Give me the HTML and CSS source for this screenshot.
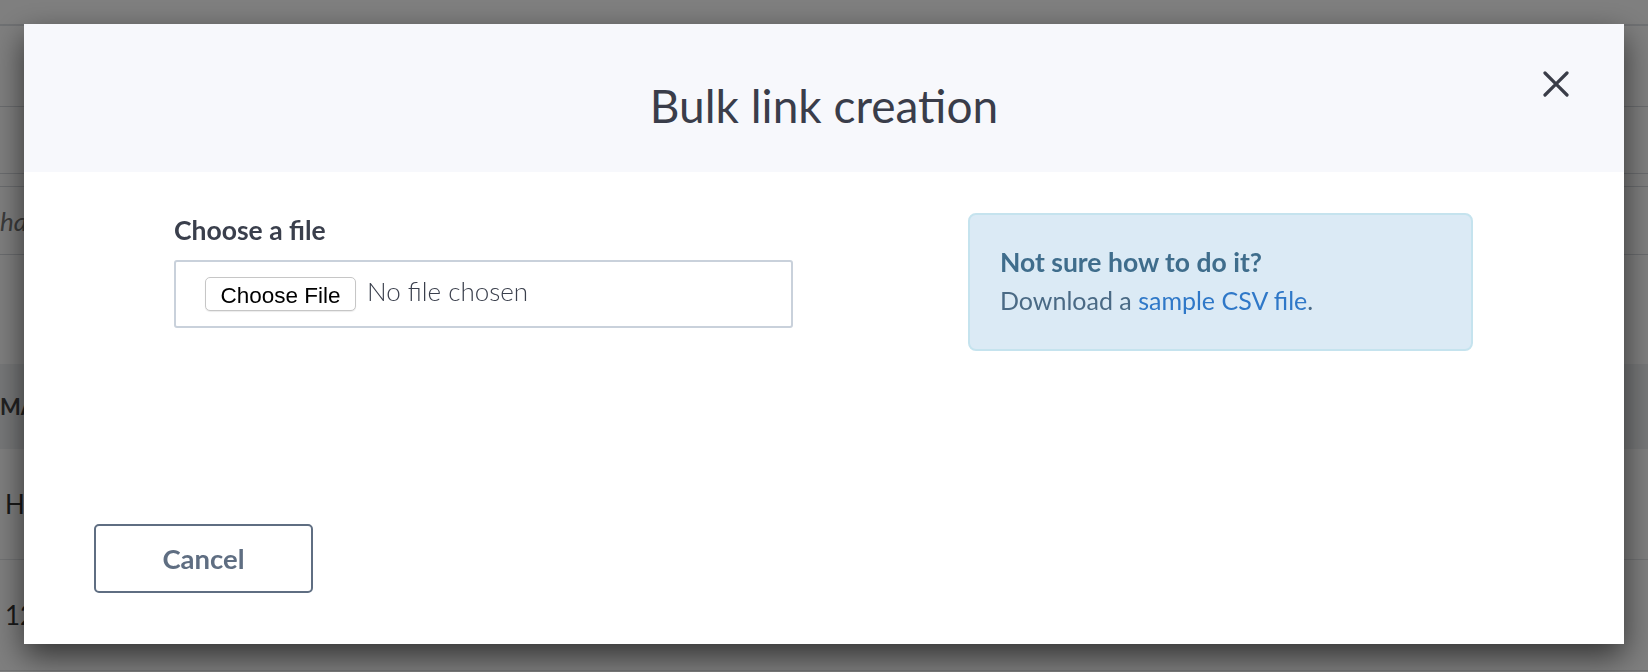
FILE: index.html
```html
<!DOCTYPE html>
<html lang="en">
<head>
<meta charset="utf-8">
<title>Bulk link creation</title>
<link rel="stylesheet" href="styles.css">
</head>
<body>
<div class="page">
  <div class="topbar"></div>
  <div class="nav"></div>
  <div class="subnav"></div>
  <div class="search"><span class="search-text">ha</span></div>
  <div class="thead"><span class="th">MA</span></div>
  <div class="trow"><span class="td">H</span></div>
  <div class="trow"><span class="td">12</span></div>
</div>

<div class="overlay">
  <div class="modal">
    <div class="modal-header">
      <h1 class="modal-title">Bulk link creation</h1>
      <button class="modal-close" aria-label="Close">
        <svg width="26" height="26" viewBox="0 0 26 26"><path d="M2 2 L24 24 M24 2 L2 24" stroke="#3a3d48" stroke-width="3.2" stroke-linecap="round" fill="none"/></svg>
      </button>
    </div>
    <div class="modal-body">
      <div class="upload">
        <div class="upload-label">Choose a file</div>
        <div class="file-box">
          <span class="file-btn">Choose File</span>
          <span class="file-name">No file chosen</span>
        </div>
      </div>
      <div class="info">
        <div class="info-title">Not sure how to do it?</div>
        <div class="info-text">Download a <a class="info-link" href="#">sample CSV file</a>.</div>
      </div>
    </div>
    <div class="modal-footer">
      <button class="btn-cancel">Cancel</button>
    </div>
  </div>
</div>
</body>
</html>
```
FILE: styles.css
```css
html, body {
  margin: 0;
  padding: 0;
}
body {
  width: 1648px;
  height: 672px;
  overflow: hidden;
  background: #fff;
  font-family: Lato, "Liberation Sans", sans-serif;
}

/* underlying page */
.page {
  display: flex;
  flex-direction: column;
}
.topbar {
  height: 24px;
  border-bottom: 2px solid #dfe2e6;
}
.nav {
  height: 80px;
  border-bottom: 1px solid #d6d9de;
}
.subnav {
  height: 66px;
  border-bottom: 1px solid #d6d9de;
  margin-bottom: 12px;
}
.search {
  height: 67px;
  border-top: 1px solid #d6d9de;
  border-bottom: 1px solid #d6d9de;
  display: flex;
  align-items: center;
}
.search-text {
  margin-left: 0;
  font-style: italic;
  font-size: 26px;
  color: #777;
  white-space: nowrap;
}
.thead {
  margin-top: 109px;
  height: 85px;
  background: #eef0f2;
  display: flex;
  align-items: center;
}
.th {
  font-weight: 700;
  font-size: 22px;
  color: #444;
  margin-left: 0;
}
.trow {
  height: 110px;
  border-bottom: 1px solid #e3e5e8;
  display: flex;
  align-items: center;
}
.td {
  margin-left: 5px;
  font-size: 26px;
  color: #333;
}

/* overlay + modal */
.overlay {
  position: fixed;
  inset: 0;
  background: rgba(0, 0, 0, 0.5);
  padding: 24px;
  display: flex;
  align-items: flex-start;
}
.modal {
  width: 1600px;
  height: 620px;
  background: #fff;
  display: flex;
  flex-direction: column;
  box-shadow: 0 12px 30px rgba(0, 0, 0, 0.6);
}
.modal-header {
  position: relative;
  height: 148px;
  box-sizing: border-box;
  padding-top: 55px;
  background: #f7f8fc;
  text-align: center;
}
.modal-title {
  margin: 0;
  font-weight: 400;
  font-size: 46px;
  line-height: 54px;
  color: #3a3d4a;
}
.modal-close {
  position: absolute;
  top: 47px;
  right: 55px;
  width: 26px;
  height: 26px;
  padding: 0;
  border: 0;
  background: none;
  display: block;
}
.modal-close svg {
  display: block;
}

.modal-body {
  flex: 1;
  display: flex;
  align-items: flex-start;
  gap: 175px;
  padding: 41px 150px 0;
}
.upload {
  width: 619px;
}
.upload-label {
  padding-top: 1px;
  font-weight: 700;
  font-size: 26.5px;
  line-height: 32px;
  color: #3a3f4c;
}
.file-box {
  margin-top: 14px;
  height: 68px;
  box-sizing: border-box;
  border: 2px solid #c9d1db;
  border-radius: 3px;
  display: flex;
  align-items: center;
  gap: 11px;
  padding-left: 29px;
}
.file-btn {
  width: 151px;
  height: 34px;
  box-sizing: border-box;
  border: 1px solid #c6c6c6;
  border-radius: 5px;
  background: #fff;
  box-shadow: 0 1px 1px rgba(0, 0, 0, 0.08);
  display: flex;
  align-items: center;
  justify-content: center;
  padding-top: 3px;
  font-family: "Liberation Sans", Arial, sans-serif;
  font-size: 22.5px;
  color: #000;
}
.file-name {
  margin-bottom: 6px;
  font-weight: 300;
  font-size: 26px;
  color: #3a3f4c;
}

.info {
  width: 505px;
  height: 138px;
  box-sizing: border-box;
  border: 2px solid #c5e3ee;
  border-radius: 8px;
  background: #dbeaf5;
  padding: 28px 30px 0;
}
.info-title {
  font-weight: 700;
  font-size: 26.5px;
  line-height: 38px;
  color: #3f6d8c;
}
.info-text {
  font-weight: 400;
  font-size: 25px;
  line-height: 38px;
  color: #4a6a85;
}
.info-link {
  color: #2f78c8;
  text-decoration: none;
}

.modal-footer {
  padding: 0 0 51px 70px;
}
.btn-cancel {
  width: 219px;
  height: 69px;
  box-sizing: border-box;
  border: 2px solid #5f6e82;
  border-radius: 5px;
  background: #fff;
  color: #5f6e82;
  font-family: Lato, "Liberation Sans", sans-serif;
  font-weight: 700;
  font-size: 27.5px;
  padding: 0;
}
```
